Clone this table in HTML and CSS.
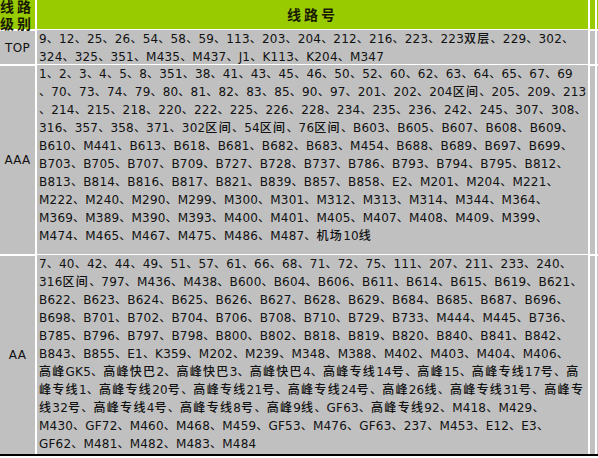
FILE: index.html
```html
<!DOCTYPE html>
<html lang="zh-CN">
<head>
<meta charset="utf-8">
<title>线路级别</title>
<link rel="stylesheet" href="styles.css">
</head>
<body>
<div class="sheet">
  <div class="cell head lvl">线路<br>级别</div>
  <div class="cell head title">线路号</div>
  <div class="cell head"></div>
  <div class="cell head"></div>

  <div class="cell label">TOP</div>
  <div class="cell lines">9、12、25、26、54、58、59、113、203、204、212、216、223、223<span class="h">双层</span>、229、302、<br>324、325、351、M435、M437、J1、K113、K204、M347</div>
  <div class="cell"></div>
  <div class="cell"></div>

  <div class="cell label">AAA</div>
  <div class="cell lines">1、2、3、4、5、8、351、38、41、43、45、46、50、52、60、62、63、64、65、67、69<br>、70、73、74、79、80、81、82、83、85、90、97、201、202、204<span class="h">区间</span>、205、209、213<br>、214、215、218、220、222、225、226、228、234、235、236、242、245、307、308、<br>316、357、358、371、302<span class="h">区间</span>、54<span class="h">区间</span>、76<span class="h">区间</span>、B603、B605、B607、B608、B609、<br>B610、M441、B613、B618、B681、B682、B683、M454、B688、B689、B697、B699、<br>B703、B705、B707、B709、B727、B728、B737、B786、B793、B794、B795、B812、<br>B813、B814、B816、B817、B821、B839、B857、B858、E2、M201、M204、M221、<br>M222、M240、M290、M299、M300、M301、M312、M313、M314、M344、M364、<br>M369、M389、M390、M393、M400、M401、M405、M407、M408、M409、M399、<br>M474、M465、M467、M475、M486、M487、<span class="h">机场</span>10<span class="h">线</span></div>
  <div class="cell"></div>
  <div class="cell"></div>

  <div class="cell label">AA</div>
  <div class="cell lines">7、40、42、44、49、51、57、61、66、68、71、72、75、111、207、211、233、240、<br>316<span class="h">区间</span>、797、M436、M438、B600、B604、B606、B611、B614、B615、B619、B621、<br>B622、B623、B624、B625、B626、B627、B628、B629、B684、B685、B687、B696、<br>B698、B701、B702、B704、B706、B708、B710、B729、B733、M444、M445、B736、<br>B785、B796、B797、B798、B800、B802、B818、B819、B820、B840、B841、B842、<br>B843、B855、E1、K359、M202、M239、M348、M388、M402、M403、M404、M406、<br><span class="h">高峰</span>GK5、<span class="h">高峰快巴</span>2、<span class="h">高峰快巴</span>3、<span class="h">高峰快巴</span>4、<span class="h">高峰专线</span>14<span class="h">号</span>、<span class="h">高峰</span>15、<span class="h">高峰专线</span>17<span class="h">号</span>、<span class="h">高</span><br><span class="h">峰专线</span>1、<span class="h">高峰专线</span>20<span class="h">号</span>、<span class="h">高峰专线</span>21<span class="h">号</span>、<span class="h">高峰专线</span>24<span class="h">号</span>、<span class="h">高峰</span>26<span class="h">线</span>、<span class="h">高峰专线</span>31<span class="h">号</span>、<span class="h">高峰专</span><br><span class="h">线</span>32<span class="h">号</span>、<span class="h">高峰专线</span>4<span class="h">号</span>、<span class="h">高峰专线</span>8<span class="h">号</span>、<span class="h">高峰</span>9<span class="h">线</span>、GF63、<span class="h">高峰专线</span>92、M418、M429、<br>M430、GF72、M460、M468、M459、GF53、M476、GF63、237、M453、E12、E3、<br>GF62、M481、M482、M483、M484</div>
  <div class="cell"></div>
  <div class="cell"></div>
</div>
</body>
</html>
```

FILE: styles.css
```css
html, body {
  margin: 0;
  padding: 0;
  background: #ffffff;
}

body {
  font-family: "DejaVu Sans", "Noto Sans CJK SC", sans-serif;
  font-size: 12px;
  color: #111111;
}

.sheet {
  display: grid;
  grid-template-columns: 35px 551px 5px 1fr;
  grid-template-rows: 29px 33px 188px 198px;
  gap: 2px;
  background: #ffffff;
  border-bottom: 2px solid #000000;
  overflow: hidden;
}

.cell {
  background: #c0c0c0;
  min-width: 0;
}

.head {
  background: #99cc00;
  font-family: "Noto Sans CJK SC", "DejaVu Sans", sans-serif;
  font-weight: bold;
  font-size: 14px;
  color: #1a1a00;
  letter-spacing: 3px;
  display: flex;
  align-items: center;
  justify-content: center;
}

.lvl {
  line-height: 17px;
  white-space: nowrap;
  justify-content: flex-start;
  text-align: left;
}

.title {
  line-height: 17px;
}

.label {
  display: flex;
  align-items: center;
  justify-content: center;
  letter-spacing: 0.3px;
}

.lines {
  padding-left: 2px;
  line-height: 18px;
  white-space: nowrap;
  letter-spacing: 0.2px;
  margin-top: -1px;
}

.h {
  letter-spacing: 1.3px;
  font-weight: 500;
}
```
